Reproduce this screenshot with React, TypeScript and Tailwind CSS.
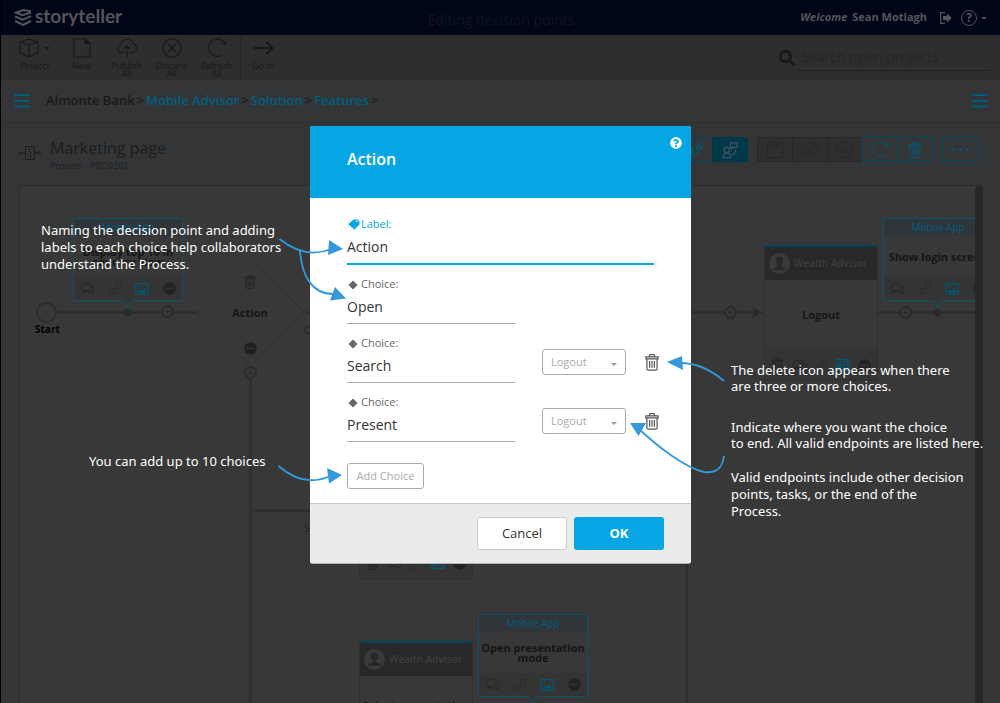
import { useState } from "react";
import type { ReactNode } from "react";
import { FaSearch, FaCaretDown, FaQuestionCircle } from "react-icons/fa";

type IconProps = { className?: string };

function Svg({ className = "", box = "0 0 24 24", width = 1.5, children }: IconProps & { box?: string; width?: number; children: ReactNode }) {
  return (
    <svg viewBox={box} className={className} fill="none" stroke="currentColor" strokeWidth={width} aria-hidden="true">
      {children}
    </svg>
  );
}

const TrashIcon = ({ className }: IconProps) => (
  <Svg className={className} box="0 0 14 17" width={1.2}>
    <path d="M4.5 2.6V1.4q0-.7.7-.7h3.6q.7 0 .7.7v1.2M.9 2.9h12.2v1.9H.9zM1.9 4.8v9.9q0 1.5 1.5 1.5h7.2q1.5 0 1.5-1.5V4.8M4.6 7v6.8M7 7v6.8M9.4 7v6.8" />
  </Svg>
);

const CubeIcon = ({ className }: IconProps) => (
  <Svg className={className} box="0 0 20 20" width={1.1}>
    <path d="M10 1 19 3.8v11L10 19 1 14.8v-11zM1 3.8 10 7l9-3.2M10 7v12" />
  </Svg>
);

const FileIcon = ({ className }: IconProps) => (
  <Svg className={className} box="0 0 20 20" width={1.1}>
    <path d="M13 1H2v18h16V5.500z" />
    <path d="M13 1v4.500h5z" fill="currentColor" />
  </Svg>
);

const CloudUpIcon = ({ className }: IconProps) => (
  <Svg className={className} box="0 0 20 20" width={1.1}>
    <path d="M7.500 14.500H4.600C2.500 14.500.7 13 .7 10.800c0-2 1.400-3.400 3.200-3.600C4 3.800 6.500 1.200 9.800 1.200c3 0 5.300 1.900 5.900 4.700 2.200.1 3.700 1.900 3.700 4.200s-1.800 4.400-4.200 4.400h-2.700M10 19V8M6.800 11.200 10 8l3.200 3.200" />
  </Svg>
);

const DiscardIcon = ({ className }: IconProps) => (
  <Svg className={className} box="0 0 20 20" width={1.1}>
    <circle cx="10" cy="10" r="9.200" />
    <path d="m5.500 5.500 9 9m0-9-9 9" />
  </Svg>
);

const RefreshIcon = ({ className }: IconProps) => (
  <Svg className={className} box="0 0 20 20" width={1.1}>
    <path d="M15.500 16.600A8.700 8.700 0 1 1 17.800 5.200M19 1.500l-.8 4.600-4.800-.8" />
  </Svg>
);

const ArrowIcon = ({ className }: IconProps) => (
  <Svg className={className} box="0 0 20 20" width={1.8}>
    <path d="M0 10h18.500M12.500 4l6 6-6 6" />
  </Svg>
);

const SaveIcon = ({ className }: IconProps) => (
  <Svg className={className} box="0 0 20 20" width={1.1}>
    <path d="M1.500 1.500h15l2 2v15h-17zM5.500 1.500v6h8.500v-6M11.500 3v3" />
  </Svg>
);

const PeopleIcon = ({ className }: IconProps) => (
  <Svg className={className} box="0 0 20 20" width={1.3}>
    <circle cx="5.500" cy="9.500" r="2.600" />
    <path d="M1.500 17.500c0-3 1.500-4.500 4-4.500s4 1.500 4 4.500z" />
    <circle cx="14.500" cy="3" r="1.900" />
    <path d="M11.500 8.500c0-2 1-3 3-3s3 1 3 3zM10 15.500c3.500 0 5-1.500 5-5" />
  </Svg>
);

const PersonScreenIcon = ({ className }: IconProps) => (
  <Svg className={className} box="0 0 20 20" width={1.4}>
    <circle cx="6.500" cy="10" r="3" />
    <path d="M2.200 18.500c0-3.400 1.600-5 4.300-5s4.300 1.600 4.300 5z" />
    <path d="M10.500 2h7.500v5.200h-4.500l-1.600 1.500V7.200h-1.400zM11.500 15.500c3.200 0 4.800-1.800 4.800-6" />
  </Svg>
);

const ProcessIcon = ({ className }: IconProps) => (
  <Svg className={className} box="0 0 22 16" width={1}>
    <path d="M6.500 1.500h9v13h-9zM3 8h3.500M15.500 8H19" />
    <path d="M12 4.500h-2V7h2v2M10 11h3M11.500 11v2.500" strokeWidth=".7" />
    <circle cx="1.800" cy="8" r="1.200" />
    <circle cx="20.200" cy="8" r="1.200" />
  </Svg>
);

const ChatIcon = ({ className }: IconProps) => (
  <Svg className={className} box="0 0 16 14" width={1}>
    <ellipse cx="6.500" cy="5.500" rx="5.600" ry="4.300" />
    <path d="m4 9-2 2.600 4-1.800M13 4.500c2.500 2 2.300 4.300.4 5.700l1 2.300-3-1.400c-1.500.3-3 0-4-.8" />
  </Svg>
);

const ChainIcon = ({ className }: IconProps) => (
  <Svg className={className} box="0 0 14 14" width={1}>
    <circle cx="10" cy="4" r="3" />
    <circle cx="4" cy="10" r="3" />
    <path d="m5 9 4-4" />
  </Svg>
);

const PictureIcon = ({ className }: IconProps) => (
  <Svg className={className} box="0 0 14 12" width={1.2}>
    <rect x=".7" y=".7" width="12.600" height="10.600" rx="1" />
    <path d="m2.500 9.500 2.500-3 2 1.500L9.300 5l2.200 4.500z" fill="currentColor" stroke="none" />
    <circle cx="3.700" cy="3.500" r="1" fill="currentColor" stroke="none" />
  </Svg>
);

const NewsIcon = ({ className }: IconProps) => (
  <Svg className={className} box="0 0 14 12" width={1.2}>
    <path d="M.7.7h10.600v10.600H.7zM11.300 2.500h2v8.800h-2M2.500 3h7M7 6h2.500M7 8.500h2.500" />
    <path d="M2.500 5.500h2.700v3.300H2.500z" fill="currentColor" />
  </Svg>
);

const MoreDot = ({ className }: IconProps) => (
  <svg viewBox="0 0 14 14" className={className} aria-hidden="true">
    <circle cx="7" cy="7" r="6.700" fill="currentColor" />
    <g fill="#3d3d3d">
      <circle cx="3.800" cy="7" r="1.200" />
      <circle cx="7" cy="7" r="1.200" />
      <circle cx="10.200" cy="7" r="1.200" />
    </g>
  </svg>
);

const AvatarIcon = ({ className }: IconProps) => (
  <svg viewBox="0 0 21 21" className={className} aria-hidden="true">
    <circle cx="10.500" cy="10.500" r="10.500" fill="#3a3a3a" />
    <path d="M10.500 3.500c-2.600 0-3.900 1.800-3.700 4.300.1 1.600.9 3 1.900 3.900v1.500c-1.700 1-4.300 1.500-5 3.800h13.600c-.7-2.300-3.300-2.800-5-3.800v-1.500c1-.9 1.800-2.300 1.900-3.900.2-2.500-1.100-4.300-3.700-4.300z" fill="#282828" />
  </svg>
);

const MenuIcon = () => (
  <svg viewBox="0 0 16 14" className="h-[14px] w-4" fill="#005a76" aria-hidden="true">
    <path d="M0 0h16v2H0zM0 6h16v2H0zM0 11.500h16v2H0z" />
  </svg>
);

function ToolButton({ icon, label }: { icon: ReactNode; label: string }) {
  return (
    <button className="flex w-[45px] flex-col items-center gap-1 pt-[3px] text-[9px] leading-[8px] text-[#171717]">
      {icon}
      <span className="w-9">{label}</span>
    </button>
  );
}

function AppCard({ title, place }: { title: string; place: string }) {
  return (
    <article className={`absolute flex h-[83px] w-[110px] flex-col rounded-[1px] border border-[#0b546c] bg-[#383838] ${place}`}>
      <p className="bg-[#2f3539] text-center text-[10px] leading-[17px] text-[#005f80]">Mobile App</p>
      <h3 className="flex flex-1 items-center justify-center text-center text-[11px] leading-[10px] font-bold text-[#151515]">{title}</h3>
      <div className="flex h-[23px] items-center justify-between bg-[#343434] px-[6px] text-[#242424]">
        <ChatIcon className="h-[13px] w-[15px]" />
        <ChainIcon className="size-[13px] text-[#2b2b2b]" />
        <PictureIcon className="h-3 w-[14px] text-[#005876]" />
        <MoreDot className="size-[13px] text-[#222222]" />
      </div>
      <svg viewBox="0 0 16 10" className="absolute -bottom-[10px] left-[46px] h-[10px] w-4" aria-hidden="true">
        <path d="M0 0c5 .5 7.500 3 8 9 .5-6 3-8.500 8-9" fill="#343434" stroke="#0b546c" />
      </svg>
    </article>
  );
}

function TaskCard({ title, place }: { title: string; place: string }) {
  return (
    <article className={`absolute flex h-[136px] w-[114px] flex-col border border-t-2 border-[#303030] border-t-[#00435c] bg-[#383838] ${place}`}>
      <header className="flex h-[33px] shrink-0 items-center gap-1 bg-[#282828] pl-1 text-[10px] font-semibold text-[#3d3d3d]">
        <AvatarIcon className="size-[21px]" />
        Wealth Advisor
      </header>
      <h3 className="flex flex-1 items-center justify-center text-center text-[11px] leading-[10px] font-bold text-[#151515]">{title}</h3>
      <div className="flex h-[31px] items-center justify-between border-t border-[#333333] bg-[#343434] px-[6px] text-[#242424]">
        <TrashIcon className="h-[14px] w-[13px]" />
        <ChatIcon className="h-[13px] w-[15px]" />
        <ChainIcon className="size-[13px] text-[#2b2b2b]" />
        <NewsIcon className="h-3 w-[14px] text-[#005876]" />
        <MoreDot className="size-[13px] text-[#222222]" />
      </div>
    </article>
  );
}

function AddNode({ x, y }: { x: number; y: number }) {
  return (
    <g>
      <circle cx={x} cy={y} r="5.500" fill="#383838" stroke="#2b2b2b" strokeWidth="2" />
      <path d={`M${x - 2.5} ${y}h5M${x} ${y - 2.5}v5`} stroke="#2b2b2b" />
    </g>
  );
}

function Diagram() {
  return (
    <section aria-label="Process diagram" className="relative mr-[17px] ml-[18px] min-h-0 flex-1 overflow-hidden border-t border-l border-[#292c2f] bg-[#383838]">
      <svg viewBox="20 186 956 517" className="absolute top-0 left-0 h-[517px] w-[956px]" fill="none" aria-hidden="true">
        <g stroke="#2d2d2d" strokeWidth="2.500">
          <path d="M56 312.500h141M305 312.500h455M877 312.500h99M250.500 372v331M252 510.500h434M687 312v391" />
          <circle cx="46.500" cy="312.500" r="9.500" strokeWidth="2" />
        </g>
        <path d="m250.500 259 54 53.500-54 53.500-54-53.500z" stroke="#303030" fill="#383838" />
        <path d="m752 307 11 5.500-11 5.500 2-5.500z" fill="#2a2a2a" />
        <circle cx="127.500" cy="312.500" r="4" fill="#2a2a2a" />
        <circle cx="937.500" cy="312.500" r="4" fill="#2a2a2a" />
        <AddNode x={167.5} y={311.5} />
        <AddNode x={250.5} y={372.5} />
        <AddNode x={730.5} y={312.5} />
        <AddNode x={905.5} y={312.5} />
      </svg>
      <AppCard title="Display top 10 in country view" place="top-[32px] left-[53px]" />
      <strong className="absolute top-[136px] left-[15px] text-[10px] text-black">Start</strong>
      <div className="absolute top-[89px] left-[200px] flex w-[60px] flex-col items-center text-[11px] text-[#151515]">
        <TrashIcon className="h-[14px] w-3 text-[#242424]" />
        <strong className="mt-4 mb-[21px] leading-4">Action</strong>
        <MoreDot className="size-[13px] text-[#202020]" />
      </div>
      <span className="absolute top-[137px] left-[284px] text-[10px] text-[#202020]">Open</span>
      <span className="absolute top-[335px] left-[284px] text-[10px] text-[#202020]">Search</span>
      <TaskCard title="Logout" place="top-[59px] left-[744px]" />
      <AppCard title="Show login screen" place="top-[32px] left-[863px]" />
      <TaskCard title="View details" place="top-[257px] left-[339px]" />
      <TaskCard title="Select presentation from list" place="top-[455px] left-[339px]" />
      <AppCard title="Open presentation mode" place="top-[428px] left-[458px]" />
      <div className="absolute top-0 right-0 h-full w-2 rounded-t bg-[#272727]" />
    </section>
  );
}

const diamond = (
  <svg viewBox="0 0 10 10" className="size-[10px]" fill="#666666" aria-hidden="true">
    <path d="m5 .5 4.500 4.500L5 9.500.5 5z" />
  </svg>
);

function Choice({ id, value, endpoint }: { id: string; value: string; endpoint?: boolean }) {
  const [text, setText] = useState(value);
  return (
    <div className="mt-[12px] flex h-[47px] items-start">
      <div className="w-[168px] shrink-0">
        <label htmlFor={id} className="flex h-[15px] items-center gap-[3px] pl-px text-[11px] text-[#666666]">
          {diamond}
          Choice:
        </label>
        <input id={id} value={text} onChange={(e) => setText(e.target.value)} className="block h-[32px] w-full border-b border-[#aaaaaa] pb-[2px] text-[14px] text-[#333333] outline-none" />
      </div>
      {endpoint && (
        <>
          <div className="relative mt-[13px] ml-[27px] w-[84px] shrink-0">
            <select aria-label={`Endpoint for ${value}`} className="block h-[26px] w-full appearance-none rounded-[3px] border border-[#aaaaaa] bg-white pl-2 text-[11px] text-[#aaaaaa] outline-none">
              <option>Logout</option>
              <option>End</option>
            </select>
            <svg viewBox="0 0 6 3" className="pointer-events-none absolute top-[14px] right-[9px] h-[3px] w-[6px]" fill="#999999" aria-hidden="true">
              <path d="M0 0h6L3 3z" />
            </svg>
          </div>
          <button aria-label={`Delete ${value}`} className="mt-[18px] ml-[19px] shrink-0 text-[#555555]">
            <TrashIcon className="h-[17px] w-[14px]" />
          </button>
        </>
      )}
    </div>
  );
}

function Annotations() {
  const note = "absolute text-[13px] text-white";
  return (
    <div className="pointer-events-none font-['Noto_Sans',sans-serif]">
      <p className={`${note} top-[96px] -left-[269px] w-[250px] leading-[17px]`}>
        Naming the decision point and adding labels to each choice help collaborators understand the Process.
      </p>
      <p className={`${note} top-[327px] -left-[221px] w-[190px] leading-[17px]`}>You can add up to 10 choices</p>
      <p className={`${note} top-[236px] left-[421px] w-[230px] leading-[16px]`}>The delete icon appears when there are three or more choices.</p>
      <p className={`${note} top-[293px] left-[421px] w-[260px] leading-[16px]`}>
        Indicate where you want the choice
        <br />
        to end. All valid endpoints are listed here.
      </p>
      <p className={`${note} top-[343px] left-[421px] w-[236px] leading-[17px]`}>Valid endpoints include other decision points, tasks, or the end of the Process.</p>
      <svg viewBox="270 220 460 280" className="absolute top-[94px] -left-[40px] h-[280px] w-[460px]" fill="none" stroke="#3598db" strokeWidth="1.800" aria-hidden="true">
        <path d="M279.500 239c15 12 32 18 52 10M300 251c2 25 12 43 33 43M278.500 466c17 15 34 18 52 10M724 381c-14-12-28-18-44-18M724 456c-2 16-12 17-20 16-18-4-47-25-69-47" />
        <g fill="#3598db" stroke="none">
          <path d="m329 240 14 9-15 6zM335 287l11 11.500-16 2zM327 468l15 7-13 8.500zM667 362l15-6 1 14zM630 423h16l-7.500 13z" />
        </g>
      </svg>
    </div>
  );
}

function ActionDialog() {
  const [label, setLabel] = useState("Action");
  return (
    <div className="pointer-events-none absolute inset-0 flex items-start justify-center pt-[126px]">
      <div role="dialog" aria-labelledby="dialog-title" className="pointer-events-auto relative w-[381px]">
        <div className="overflow-hidden rounded-[3px] border-b border-[#b5b5b5] bg-white">
          <header className="flex h-[72px] items-start justify-between bg-[#06a6e4] pr-[9px] pl-[37px] text-white">
            <h2 id="dialog-title" className="pt-[21px] text-[16px] leading-6 font-semibold">Action</h2>
            <button aria-label="Help" className="mt-[11px]">
              <FaQuestionCircle className="size-3" />
            </button>
          </header>
          <form className="px-[37px] pt-[19px] pb-[14px]" onSubmit={(e) => e.preventDefault()}>
            <label htmlFor="action-label" className="flex h-[15px] items-center gap-px pl-px text-[11px] text-[#06a6e4]">
              <svg viewBox="0 0 12 11" className="h-[11px] w-3" fill="currentColor" aria-hidden="true">
                <path d="M5.500.5h5v4.500L5.500 9.800.3 5.300zM11.500 1.500v4L6 11 1.500 7.500l4 3z" />
                <circle cx="8.800" cy="2.300" r=".8" fill="#ffffff" />
              </svg>
              Label:
            </label>
            <input id="action-label" value={label} onChange={(e) => setLabel(e.target.value)} className="block h-[33px] w-full border-b-2 border-[#06a6e4] pb-[3px] text-[14px] text-[#333333] outline-none" />
            <Choice id="choice-1" value="Open" />
            <Choice id="choice-2" value="Search" endpoint />
            <Choice id="choice-3" value="Present" endpoint />
            <button type="button" className="mt-[21px] block h-[26px] w-[77px] rounded-[3px] border border-[#aaaaaa] text-[11px] text-[#aaaaaa]">Add Choice</button>
          </form>
          <footer className="flex h-[60px] items-center justify-end gap-[7px] border-t border-[#c8c8c8] bg-[#ebebeb] pr-[27px] text-[13px]">
            <button className="h-[33px] w-[90px] rounded-[3px] border border-[#cccccc] bg-white text-[#333333]">Cancel</button>
            <button className="h-[33px] w-[90px] rounded-[3px] bg-[#06a6e4] font-bold text-white">OK</button>
          </footer>
        </div>
        <Annotations />
      </div>
    </div>
  );
}

export default function App() {
  const crumb = "text-[#005f7f]";
  const segment = "flex h-[25px] w-[36px] items-center justify-center border -ml-px";
  return (
    <div className="relative flex h-screen flex-col overflow-hidden border-l border-black bg-[#333537] font-['Open_Sans',sans-serif]">
      <header className="grid h-[35px] shrink-0 grid-cols-[1fr_auto_1fr] items-center bg-[#000518] pr-[12px] pl-[13px] text-[#55555a]">
        <a href="#home" className="flex items-center gap-[3px] font-['Lato',sans-serif] text-[19px] leading-none font-bold">
          <svg viewBox="0 0 18 18" className="size-[18px]" fill="none" stroke="currentColor" strokeWidth="2" aria-hidden="true">
            <path d="M17 2.500 9.500 1 2 3.700l6.500 2.600L17 3.500M1 7.500l8 3.200 8-3.500M1 12l8 4 8-4" />
          </svg>
          <span className="-mt-1">storyteller</span>
        </a>
        <h1 className="pt-[4px] text-[14px] text-[#12151b]">Editing decision points</h1>
        <div className="flex items-center justify-end text-[11px] font-bold">
          <em className="mr-[5px]">Welcome</em>
          <span>Sean Motlagh</span>
          <button aria-label="Sign out" className="ml-[13px]">
            <svg viewBox="0 0 12 12" className="size-3" aria-hidden="true">
              <path d="M5 .7H.7v10.600H5" fill="none" stroke="currentColor" strokeWidth="1.200" />
              <path d="M3 4h4V1.500L11.800 6 7 10.500V8H3z" fill="currentColor" />
            </svg>
          </button>
          <button aria-label="Help menu" className="ml-[9px] flex items-center gap-[3px]">
            <span className="flex size-4 items-center justify-center rounded-full border text-[12px]">?</span>
            <FaCaretDown className="size-2" />
          </button>
        </div>
      </header>

      <div className="flex h-[45px] shrink-0 items-stretch bg-[#2e2e2e] text-[#171717]">
        <div className="flex w-[58px] justify-end border-r border-[#2a2a2a]">
          <button className="flex flex-col gap-1 pt-[3px] pr-[7px] text-[9px] leading-[8px]">
            <span className="flex items-center">
              <CubeIcon className="size-5" />
              <FaCaretDown className="ml-1 size-2" />
            </span>
            <span>Project</span>
          </button>
        </div>
        <div className="flex border-r border-[#232323] pr-px">
          <ToolButton icon={<FileIcon className="size-5" />} label="New" />
          <ToolButton icon={<CloudUpIcon className="size-5" />} label="Publish All" />
          <ToolButton icon={<DiscardIcon className="size-5" />} label="Discard All" />
          <ToolButton icon={<RefreshIcon className="size-5" />} label="Refresh All" />
        </div>
        <ToolButton icon={<ArrowIcon className="size-5" />} label="Go to" />
        <label className="mr-[9px] ml-auto flex items-center gap-[3px]">
          <FaSearch className="size-4" aria-hidden="true" />
          <input type="search" aria-label="Search open projects" placeholder="Search open projects" className="h-[26px] w-[193px] border-b border-[#202020] pb-[2px] pl-[3px] text-[14px] outline-none placeholder:text-[#252525]" />
        </label>
      </div>

      <div className="flex h-[43px] shrink-0 items-center justify-between border-b border-[#2d2f31] pr-[12px] pl-[13px]">
        <div className="flex items-center gap-4">
          <button aria-label="Open left panel"><MenuIcon /></button>
          <nav aria-label="Breadcrumb" className="flex gap-[2px] text-[13px] font-semibold text-[#191919]">
            <span>Almonte Bank</span>
            <span className="font-normal">&gt;</span>
            <a href="#advisor" className={crumb}>Mobile Advisor</a>
            <span className="font-normal">&gt;</span>
            <a href="#solution" className={crumb}>Solution</a>
            <span className="font-normal">&gt;</span>
            <a href="#features" className={crumb}>Features</a>
            <span className="font-normal">&gt;</span>
          </nav>
        </div>
        <button aria-label="Open right panel"><MenuIcon /></button>
      </div>

      <div className="flex h-[62px] shrink-0 items-start justify-between pt-[14px] pr-[21px] pl-[18px]">
        <div className="flex gap-[9px] text-[#1c1d1e]">
          <ProcessIcon className="mt-2 h-4 w-[22px]" />
          <div>
            <h2 className="text-[16px] leading-[22px]">Marketing page</h2>
            <p className="text-[9px] leading-[14px] text-[#1f2123]">Process - PRO9201</p>
          </div>
        </div>
        <div className="flex gap-[9px] text-[#005a76]">
          <div className="flex">
            <button aria-label="User view" className={`${segment} rounded-l-[3px] border-[#004a61]`}><PeopleIcon className="size-[18px]" /></button>
            <button aria-label="System view" className={`${segment} rounded-r-[3px] border-[#00384b] bg-[#00384b] text-[#43555c]`}><PersonScreenIcon className="size-[18px]" /></button>
          </div>
          <div className="flex pl-px">
            <button aria-label="Save" className={`${segment} rounded-l-[3px] border-[#272727] bg-[#2e2f2f] text-[#262626]`}><SaveIcon className="size-[18px]" /></button>
            <button aria-label="Publish" className={`${segment} border-[#272727] bg-[#2e2f2f] text-[#262626]`}><CloudUpIcon className="size-[18px]" /></button>
            <button aria-label="Discard" className={`${segment} border-[#272727] bg-[#2e2f2f] text-[#262626]`}><DiscardIcon className="size-[18px]" /></button>
            <button aria-label="Refresh" className={`${segment} border-[#004a61]`}><RefreshIcon className="size-[17px]" /></button>
            <button aria-label="Delete" className={`${segment} rounded-r-[3px] border-[#004a61]`}><TrashIcon className="h-4 w-[14px]" /></button>
          </div>
          <button aria-label="More actions" className="flex h-[25px] w-[37px] items-center justify-center rounded-[3px] border border-[#004a61]">
            <svg viewBox="0 0 17 3" className="h-[3px] w-[17px]" fill="currentColor" aria-hidden="true">
              <circle cx="1.500" cy="1.500" r="1.500" />
              <circle cx="8.500" cy="1.500" r="1.500" />
              <circle cx="15.500" cy="1.500" r="1.500" />
            </svg>
          </button>
        </div>
      </div>

      <Diagram />
      <ActionDialog />
    </div>
  );
}
